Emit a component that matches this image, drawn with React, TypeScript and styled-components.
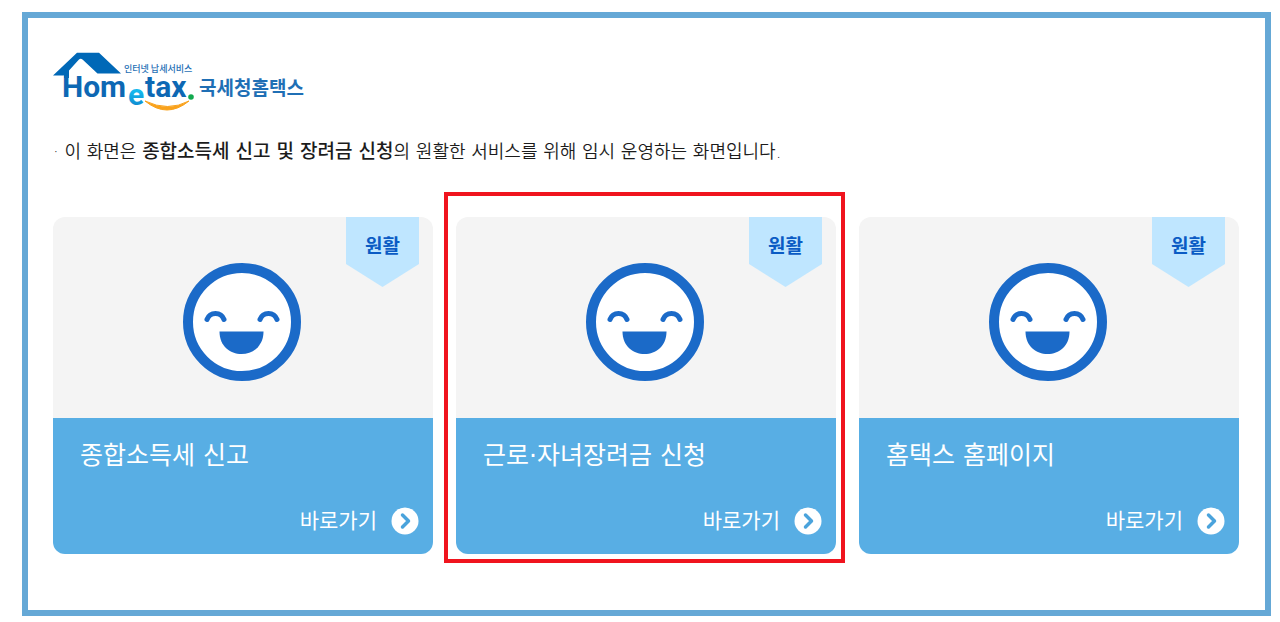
import React from "react";
import styled, { createGlobalStyle, css } from "styled-components";

const GlobalStyle = createGlobalStyle`
  *, *::before, *::after { box-sizing: border-box; }
  body {
    margin: 0;
    background: #fff;
    color: #1c1c1c;
    font-family: "DejaVu Sans", "Noto Sans CJK KR", sans-serif;
  }
`;

const Frame = styled.main`
  margin: 12px 9px 6px 22px;
  padding: 32px 26px 56px 25px;
  border: 6px solid #65a8d6;
`;

const LogoLink = styled.a`
  display: block;
  width: 256px;
  height: 64px;
`;

const Notice = styled.p`
  margin: 21px 0 49px;
  font-size: 18px;
  line-height: 33px;
  font-weight: 350;

  strong {
    font-size: 19px;
    font-weight: 500;
  }
`;

const CardGrid = styled.nav`
  display: grid;
  grid-template-columns: repeat(3, 1fr);
  gap: 23px;
`;

const Card = styled.a<{ $highlighted?: boolean }>`
  position: relative;
  display: flex;
  flex-direction: column;
  color: #fff;
  text-decoration: none;

  ${({ $highlighted }) =>
    $highlighted &&
    css`
      &::after {
        content: "";
        position: absolute;
        inset: -25px -9px -9px -12px;
        border: 4px solid #f0141e;
        pointer-events: none;
      }
    `}
`;

const CardTop = styled.div`
  display: flex;
  justify-content: center;
  padding: 45px 0 36px;
  border-radius: 12px 12px 0 0;
  background: #f4f4f4;
`;

const Face = styled.svg`
  display: block;
  width: 120px;
  height: 120px;
`;

const Badge = styled.span`
  position: absolute;
  top: 0;
  right: 14px;
  width: 73px;
  height: 70px;
  background: #bfe6ff;
  clip-path: polygon(0 0, 100% 0, 100% 47px, 50% 100%, 0 47px);
  color: #0a5bc4;
  font-size: 19px;
  font-weight: 700;
  line-height: 58px;
  text-align: center;
`;

const CardBottom = styled.div`
  display: flex;
  flex-direction: column;
  gap: 31px;
  padding: 19px 14px 18px 27px;
  border-radius: 0 0 12px 12px;
  background: #58aee4;
`;

const CardTitle = styled.span`
  font-size: 25px;
  line-height: 38px;
`;

const GoRow = styled.span`
  display: flex;
  align-items: center;
  justify-content: flex-end;
  gap: 14px;
  font-size: 21px;
  line-height: 30px;
`;

const GoIcon = styled.svg`
  display: block;
  width: 28px;
  height: 28px;
`;

const Logo = () => (
  <svg width="256" height="64" viewBox="0 0 256 64" role="img" aria-label="Hometax 국세청홈택스">
    <defs>
      <linearGradient id="logo-e" x1="0" y1="0" x2="0" y2="1">
        <stop offset="0.4" stopColor="#16b9ee" />
        <stop offset="1" stopColor="#0a78c4" />
      </linearGradient>
    </defs>
    <path d="M24 2.7H46L68 23.5H44.5L29.5 9.500Q27.500 8 25.500 10L16 20.500V28H11V25.500H0Z" fill="#0068b7" />
    <g fill="#0d68b4" fontFamily="Roboto, sans-serif" fontWeight="700" fontSize="30">
      <text x="9" y="47">Hom</text>
      <text x="92" y="47">tax</text>
      <text x="75" y="55" fill="url(#logo-e)">e</text>
    </g>
    <circle cx="138" cy="47" r="2.800" fill="#12a94f" />
    <path d="M92 51Q114 69 136 51Q115 62 92 51Z" fill="#f9a21c" stroke="#f9a21c" strokeWidth="1" />
    <g fill="#1f6fb5" fontFamily="'Noto Sans CJK KR', sans-serif">
      <text x="71" y="22" fontSize="9" fontWeight="500">인터넷 납세서비스</text>
      <text x="146" y="45" fontSize="19" fontWeight="700">국세청홈택스</text>
    </g>
  </svg>
);

const SmileFace = () => (
  <Face viewBox="0 0 120 120" aria-hidden="true">
    <circle cx="59" cy="60" r="54" fill="#fff" stroke="#1b6ac8" strokeWidth="10" />
    <path
      d="M24 57.500C27 49.500 38 49.500 41 57.500M77 57.500C80 49.500 91 49.500 94 57.500"
      fill="none"
      stroke="#1b6ac8"
      strokeWidth="5"
      strokeLinecap="round"
    />
    <path d="M36.500 69.500H80.500C80.500 84 70 92 58.500 92S36.500 84 36.500 69.500Z" fill="#1b6ac8" />
  </Face>
);

const services = [
  { title: "종합소득세 신고", status: "원활" },
  { title: "근로·자녀장려금 신청", status: "원활", highlighted: true },
  { title: "홈택스 홈페이지", status: "원활" },
];

export default function App() {
  return (
    <>
      <GlobalStyle />
      <Frame>
        <LogoLink href="#">
          <Logo />
        </LogoLink>
        <Notice>
          · 이 화면은 <strong>종합소득세 신고 및 장려금 신청</strong>의 원활한 서비스를 위해 임시 운영하는 화면입니다.
        </Notice>
        <CardGrid>
          {services.map((service) => (
            <Card key={service.title} href="#" $highlighted={service.highlighted}>
              <CardTop>
                <SmileFace />
                <Badge>{service.status}</Badge>
              </CardTop>
              <CardBottom>
                <CardTitle>{service.title}</CardTitle>
                <GoRow>
                  바로가기
                  <GoIcon viewBox="0 0 28 28" aria-hidden="true">
                    <circle cx="14" cy="14" r="13.500" fill="#fff" />
                    <path
                      d="M11.500 8L17.500 14L11.500 20"
                      fill="none"
                      stroke="#4aa3dc"
                      strokeWidth="3.500"
                      strokeLinecap="round"
                      strokeLinejoin="round"
                    />
                  </GoIcon>
                </GoRow>
              </CardBottom>
            </Card>
          ))}
        </CardGrid>
      </Frame>
    </>
  );
}
